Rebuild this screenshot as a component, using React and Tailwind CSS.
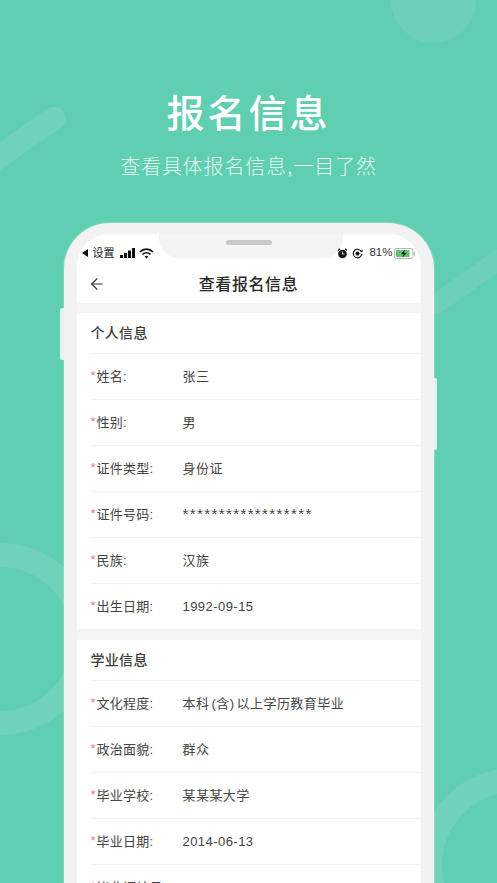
import React from 'react';
import { ArrowLeft } from 'lucide-react';

const personal = [
  { label: '姓名:', value: '张三' },
  { label: '性别:', value: '男' },
  { label: '证件类型:', value: '身份证' },
  { label: '证件号码:', value: '******************', stars: true },
  { label: '民族:', value: '汉族' },
  { label: '出生日期:', value: '1992-09-15' },
];

const study = [
  { label: '文化程度:', value: '本科 (含) 以上学历教育毕业' },
  { label: '政治面貌:', value: '群众' },
  { label: '毕业学校:', value: '某某某大学' },
  { label: '毕业日期:', value: '2014-06-13' },
  { label: '毕业证编号:', value: '' },
];

const Row = ({ label, value, stars }) => (
  <div className="h-[46px] ml-[14px] border-t border-[#f3f3f3] flex items-center text-[13px] text-[#444444] tracking-[0.25px]">
    <div className="w-[92px] flex items-center whitespace-nowrap">
      <span className="text-[#e57f7f] text-[13px] w-[6px] -translate-y-[1px]">*</span>
      <span>{label}</span>
    </div>
    <div className={stars ? 'whitespace-nowrap text-[15px] tracking-[1.4px]' : 'whitespace-nowrap tracking-[0.45px] [word-spacing:-2px]'}>{value}</div>
  </div>
);

const SectionTitle = ({ children }) => (
  <div className="h-[40px] pl-[14px] flex items-center text-[14px] font-medium text-[#3d3d3d] tracking-[0.3px]">
    {children}
  </div>
);

const StatusBar = () => (
  <div className="h-[32px] flex items-center justify-between pl-[5px] pr-[6px] pt-[6px] text-[11px] text-[#1a1a1a]">
    <div className="flex items-center gap-[3px]">
      <svg width="7" height="8" viewBox="0 0 7 8"><path d="M0 4l6-4v8z" fill="#111" /></svg>
      <span className="ml-[1px]">设置</span>
      <svg width="16" height="10" viewBox="0 0 16 10" className="ml-[2px]">
        <rect x="0" y="7" width="3" height="3" fill="#111" />
        <rect x="4" y="5" width="3" height="5" fill="#111" />
        <rect x="8" y="2.5" width="3" height="7.5" fill="#111" />
        <rect x="12" y="0" width="3" height="10" fill="#111" />
      </svg>
      <svg width="15" height="11" viewBox="0 0 15 11" fill="none" stroke="#111" strokeWidth="1.7">
        <path d="M1 4a9 9 0 0 1 13 0" />
        <path d="M3.5 6.5a5.5 5.5 0 0 1 8 0" />
        <path d="M7.5 10.5L5.7 8.6a2.5 2.5 0 0 1 3.6 0z" fill="#111" stroke="none" />
      </svg>
    </div>
    <div className="flex items-center">
      <svg width="11" height="11" viewBox="0 0 11 11" className="mr-[4px]">
        <circle cx="5.5" cy="6" r="4.3" fill="#111" />
        <path d="M1 2.5L3 .8M10 2.5L8 .8" stroke="#111" strokeWidth="1.3" />
        <path d="M5.5 3.5v2.7h2" stroke="#fff" strokeWidth=".8" fill="none" />
      </svg>
      <svg width="11" height="11" viewBox="0 0 11 11" fill="none" className="mr-[6px]">
        <path d="M9.6 4.2A4.3 4.3 0 1 0 9.8 6" stroke="#111" strokeWidth="1.1" />
        <path d="M8 3.8h2.6V1.4z" fill="#111" />
        <circle cx="5.5" cy="5.5" r="2" fill="#111" />
      </svg>
      <span className="text-[11.5px] text-[#333] mr-[1px]">81%</span>
      <svg width="21" height="11" viewBox="0 0 21 11">
        <rect x=".5" y=".5" width="18.5" height="10" rx="2" fill="#fff" stroke="#b5b5b5" />
        <rect x="2" y="2" width="13.5" height="7" rx="1" fill="#5ec46e" />
        <rect x="19.5" y="3.5" width="1.3" height="4" fill="#b5b5b5" />
        <path d="M11 1.5L7 6h2.6L8.6 9.5 12.6 5H10z" fill="#111" />
      </svg>
    </div>
  </div>
);

export default function App() {
  return (
    <div className="relative w-[497px] h-[883px] overflow-hidden bg-[#60ceb1] font-['Liberation_Sans','Noto_Sans_CJK_SC',sans-serif]">
      {/* background shapes */}
      <div className="absolute left-[391px] top-[-42px] w-[85px] h-[85px] rounded-full bg-[#6dd0b7]" />
      <div className="absolute left-[-44px] top-[134px] w-[118px] h-[23px] rounded-full bg-[#71d2ba] rotate-[-35deg]" />
      <div className="absolute left-[-96px] top-[543px] w-[192px] h-[192px] rounded-full border-[24px] border-[#71d2ba]" />
      <div className="absolute left-[418px] top-[768px] w-[194px] h-[194px] rounded-full border-[24px] border-[#71d2ba]" />
      <div className="absolute left-[420px] top-[270px] w-[100px] h-[20px] rounded-full bg-[#6dd0b7] rotate-[-35deg]" />

      <div className="relative flex flex-col items-center">
        <h1 className="mt-[90px] text-[38px] leading-[48px] text-white tracking-[3px] font-medium">报名信息</h1>
        <p className="mt-[16px] text-[20px] leading-[26px] text-[#e3f7f1] tracking-[0.85px] font-light">查看具体报名信息,一目了然</p>

        {/* phone */}
        <div className="relative mt-[43px] w-[370px] h-[700px] rounded-t-[46px] bg-[#f2f2f2] px-[13px] pt-[11px] shadow-[0_0_2px_rgba(255,255,255,0.7)]">
          <div className="absolute left-[-4px] top-[85px] w-[4px] h-[52px] rounded-l-[2px] bg-[#e4f3ef]" />
          <div className="absolute right-[-3px] top-[155px] w-[3px] h-[72px] rounded-r-[2px] bg-[#e4f3ef]" />

          <div className="relative h-full rounded-t-[32px] bg-white overflow-hidden">
            {/* notch */}
            <div className="absolute left-[82px] top-[-2px] w-[184px] h-[26px] rounded-b-[20px] bg-[#f4f4f4]" />
            <div className="absolute left-[149px] top-[6px] w-[46px] h-[5px] rounded-full bg-[#c9c9c9]" />

            <div className="relative">
              <StatusBar />
              <div className="relative h-[37px] flex items-center justify-center">
                <ArrowLeft className="absolute left-[11px] top-[9px] w-[18px] h-[18px] text-[#333333]" strokeWidth={1.5} />
                <span className="text-[16px] font-medium text-[#2a2a2a] tracking-[0.6px]">查看报名信息</span>
              </div>
              <div className="h-[10px] bg-[#f5f5f5]" />
              <SectionTitle>个人信息</SectionTitle>
              {personal.map((item) => (
                <Row key={item.label} {...item} />
              ))}
              <div className="h-[11px] bg-[#f5f5f5]" />
              <SectionTitle>学业信息</SectionTitle>
              {study.map((item) => (
                <Row key={item.label} {...item} />
              ))}
            </div>
          </div>
        </div>
      </div>
    </div>
  );
}
